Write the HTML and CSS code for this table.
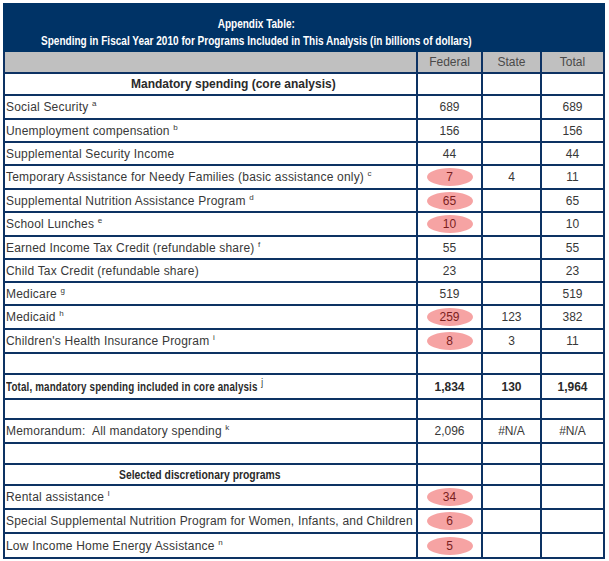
FILE: index.html
```html
<!DOCTYPE html>
<html>
<head>
<meta charset="utf-8">
<link rel="stylesheet" href="styles.css">
</head>
<body>
<div class="sheet">
  <div class="title"><span class="title-text">Appendix Table:<br>Spending in Fiscal Year 2010 for Programs Included in This Analysis (in billions of dollars)</span></div>
  <div class="row head h20"><div></div><div>Federal</div><div>State</div><div>Total</div></div>
  <div class="row h20"><div class="section s1">Mandatory spending (core analysis)</div><div></div><div></div><div></div></div>
  <div class="row h22"><div><span>Social Security <sup>a</sup></span></div><div>689</div><div></div><div>689</div></div>
  <div class="row h21"><div><span>Unemployment compensation <sup>b</sup></span></div><div>156</div><div></div><div>156</div></div>
  <div class="row h21"><div><span>Supplemental Security Income</span></div><div>44</div><div></div><div>44</div></div>
  <div class="row h22"><div><span>Temporary Assistance for Needy Families (basic assistance only) <sup>c</sup></span></div><div><span class="mark">7</span></div><div>4</div><div>11</div></div>
  <div class="row h21"><div><span>Supplemental Nutrition Assistance Program <sup>d</sup></span></div><div><span class="mark">65</span></div><div></div><div>65</div></div>
  <div class="row h22"><div><span>School Lunches <sup>e</sup></span></div><div><span class="mark">10</span></div><div></div><div>10</div></div>
  <div class="row h21"><div><span>Earned Income Tax Credit (refundable share) <sup>f</sup></span></div><div>55</div><div></div><div>55</div></div>
  <div class="row h21"><div><span>Child Tax Credit (refundable share)</span></div><div>23</div><div></div><div>23</div></div>
  <div class="row h21"><div><span>Medicare <sup>g</sup></span></div><div>519</div><div></div><div>519</div></div>
  <div class="row h22"><div><span>Medicaid <sup>h</sup></span></div><div><span class="mark">259</span></div><div>123</div><div>382</div></div>
  <div class="row h22"><div><span>Children's Health Insurance Program <sup>i</sup></span></div><div><span class="mark">8</span></div><div>3</div><div>11</div></div>
  <div class="row h19"><div></div><div></div><div></div><div></div></div>
  <div class="row h23 total"><div><span class="cond c81">Total, mandatory spending included in core analysis <sup>j</sup></span></div><div>1,834</div><div>130</div><div>1,964</div></div>
  <div class="row h18"><div></div><div></div><div></div><div></div></div>
  <div class="row h22"><div><span>Memorandum:&nbsp; All mandatory spending <sup>k</sup></span></div><div>2,096</div><div>#N/A</div><div>#N/A</div></div>
  <div class="row h19"><div></div><div></div><div></div><div></div></div>
  <div class="row h19"><div class="section s2"><span class="cond c86">Selected discretionary programs</span></div><div></div><div></div><div></div></div>
  <div class="row h22"><div><span>Rental assistance <sup>l</sup></span></div><div><span class="mark">34</span></div><div></div><div></div></div>
  <div class="row h22"><div><span>Special Supplemental Nutrition Program for Women, Infants, and Children</span></div><div><span class="mark">6</span></div><div></div><div></div></div>
  <div class="row h23"><div><span>Low Income Home Energy Assistance <sup>n</sup></span></div><div><span class="mark">5</span></div><div></div><div></div></div>
</div>
</body>
</html>
```
FILE: styles.css
```css
body {
  margin: 3px;
  font-family: "Liberation Sans", Arial, sans-serif;
  font-size: 12px;
  color: #383838;
  background: #fff;
}
.sheet {
  width: 602px;
  box-sizing: border-box;
  background: #0d3263;
  padding: 0 2px 2px 2px;
  display: flex;
  flex-direction: column;
  gap: 2px;
}
.title {
  height: 49px;
  box-sizing: border-box;
  margin: 0 -2px -2px -2px;
  padding: 13px 0 0 38px;
  background: #003366;
  color: #fff;
  font-weight: bold;
  font-size: 12.5px;
  line-height: 17px;
  text-align: left;
  white-space: nowrap;
}
.title-text {
  display: inline-block;
  text-align: center;
  transform: scaleX(0.803);
  transform-origin: left top;
}
.row {
  display: grid;
  grid-template-columns: 411px 63px 57px 61px;
  gap: 2px;
}
.row > div {
  background: #fff;
  display: flex;
  align-items: center;
  justify-content: center;
  white-space: nowrap;
}
.row > div:first-child {
  justify-content: flex-start;
  padding-left: 1px;
  letter-spacing: 0.2px;
}
.head > div {
  background: #c0c0c0;
  color: #4a4a4a;
}
.h18 { height: 18px; }
.h19 { height: 19px; }
.h20 { height: 20px; }
.h21 { height: 21px; }
.h22 { height: 22px; }
.h23 { height: 23px; }
sup {
  font-size: 8px;
  vertical-align: 0;
  position: relative;
  top: -5px;
  letter-spacing: 0;
}
.total > div,
.row > div.section {
  font-weight: bold;
  color: #2a2a2a;
  letter-spacing: 0;
}
.total sup {
  font-size: 10px;
  font-weight: normal;
  margin-left: 1px;
}
.cond {
  display: inline-block;
  transform-origin: left center;
}
.c81 { transform: scaleX(0.815); }
.c86 { transform: scaleX(0.865); }
.row > div.s1 { padding-left: 126px; }
.row > div.s2 { padding-left: 114px; }
.mark {
  display: inline-block;
  width: 46px;
  height: 18px;
  line-height: 18px;
  border-radius: 50%;
  background: #f6a3a3;
  color: #7b1e1e;
  text-align: center;
}
```
